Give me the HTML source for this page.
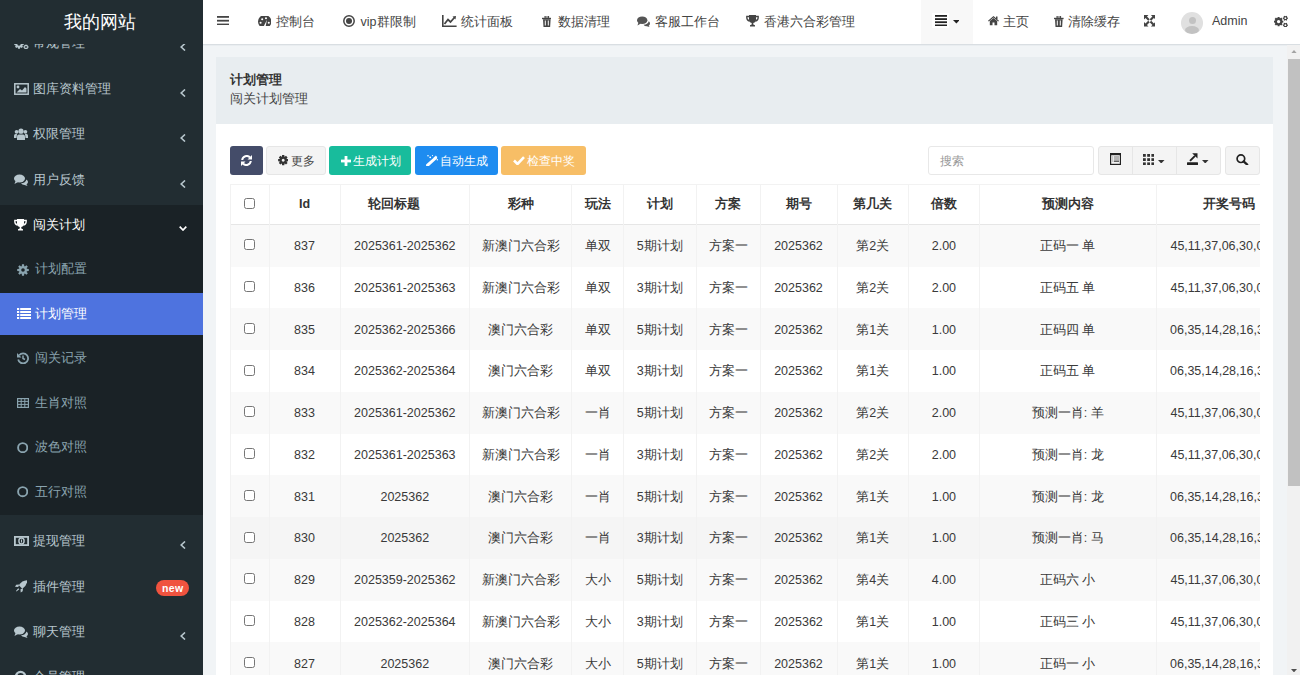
<!DOCTYPE html><html><head><meta charset="utf-8"><style>
*{margin:0;padding:0;box-sizing:border-box}
html,body{width:1300px;height:675px;overflow:hidden;background:#f1f4f6;font-family:"Liberation Sans", sans-serif;}
.a{position:absolute}
.t{position:absolute;white-space:nowrap}
#sb{position:absolute;left:0;top:0;width:203px;height:675px;background:#222d32;overflow:hidden}
#hd{position:absolute;left:203px;top:0;width:1097px;height:45px;background:#fff;border-bottom:1px solid #d9dee2;box-shadow:0 1px 0 #e9edf0}
.nv{position:absolute;top:0;height:44px;line-height:43px;font-size:12.5px;color:#555;white-space:nowrap}
.mi{position:absolute;left:0;width:203px;height:45px;line-height:45px;font-size:12.5px;color:#b8c7ce;white-space:nowrap}
.sm{color:#8aa4af}
.btn{position:absolute;top:146px;height:29px;border-radius:3px;color:#fff;font-size:12.5px;line-height:29px;white-space:nowrap}
.th{position:absolute;top:185px;height:39px;line-height:39px;font-size:12.5px;font-weight:bold;color:#333;text-align:center;white-space:nowrap}
.td{position:absolute;font-size:12.5px;color:#3a3a3a;text-align:center;white-space:nowrap}
</style></head><body><div id="sb"><div class="a" style="left:0;top:205px;width:203px;height:310.3px;background:#1a2226"></div><div class="a" style="left:0;top:293.3px;width:203px;height:41.5px;background:#4e73df"></div><svg style="position:absolute;left:13.5px;top:37.4px;width:16px;height:12px;" viewBox="0 0 16 12" fill="#b8c7ce"><path fill-rule="evenodd" d="M8.51 5.84 L9.71 6.07 L9.71 7.93 L8.51 8.16 L8.30 8.67 L8.99 9.67 L7.67 10.99 L6.67 10.30 L6.16 10.51 L5.93 11.71 L4.07 11.71 L3.84 10.51 L3.33 10.30 L2.33 10.99 L1.01 9.67 L1.70 8.67 L1.49 8.16 L0.29 7.93 L0.29 6.07 L1.49 5.84 L1.70 5.33 L1.01 4.33 L2.33 3.01 L3.33 3.70 L3.84 3.49 L4.07 2.29 L5.93 2.29 L6.16 3.49 L6.67 3.70 L7.67 3.01 L8.99 4.33 L8.30 5.33Z M6.70 7.00 A1.7 1.7 0 1 0 3.30 7.00 A1.7 1.7 0 1 0 6.70 7.00Z"/><path fill-rule="evenodd" d="M13.73 2.22 L14.51 2.33 L14.51 3.67 L13.73 3.78 L13.54 4.11 L13.83 4.84 L12.68 5.51 L12.19 4.89 L11.81 4.89 L11.32 5.51 L10.17 4.84 L10.46 4.11 L10.27 3.78 L9.49 3.67 L9.49 2.33 L10.27 2.22 L10.46 1.89 L10.17 1.16 L11.32 0.49 L11.81 1.11 L12.19 1.11 L12.68 0.49 L13.83 1.16 L13.54 1.89Z M12.90 3.00 A0.9 0.9 0 1 0 11.10 3.00 A0.9 0.9 0 1 0 12.90 3.00Z"/><path fill-rule="evenodd" d="M13.73 9.22 L14.51 9.33 L14.51 10.67 L13.73 10.78 L13.54 11.11 L13.83 11.84 L12.68 12.51 L12.19 11.89 L11.81 11.89 L11.32 12.51 L10.17 11.84 L10.46 11.11 L10.27 10.78 L9.49 10.67 L9.49 9.33 L10.27 9.22 L10.46 8.89 L10.17 8.16 L11.32 7.49 L11.81 8.11 L12.19 8.11 L12.68 7.49 L13.83 8.16 L13.54 8.89Z M12.90 10.00 A0.9 0.9 0 1 0 11.10 10.00 A0.9 0.9 0 1 0 12.90 10.00Z"/></svg><div class="t" style="left:33px;top:34.4px;height:18px;line-height:18px;font-size:12.5px;color:#b8c7ce">常规管理</div><svg style="position:absolute;left:180px;top:43.4px;width:6px;height:8px;" viewBox="0 0 6 8" fill="currentColor"><path d="M5 0.5 L1.2 4 L5 7.5" fill="none" stroke="#b8c7ce" stroke-width="1.6"/></svg><svg style="position:absolute;left:13.5px;top:82.8px;width:15px;height:12px;" viewBox="0 0 15 12" fill="currentColor"><rect x="0.8" y="0.8" width="13.4" height="10.4" fill="none" stroke="#b8c7ce" stroke-width="1.5"/><circle cx="4" cy="4" r="1.4" fill="#b8c7ce"/><path d="M2.5 9.5 L6 6 L8 7.5 L11 4 L12.5 5.5 L12.5 9.5Z" fill="#b8c7ce"/></svg><div class="t" style="left:33px;top:79.8px;height:18px;line-height:18px;font-size:12.5px;color:#b8c7ce">图库资料管理</div><svg style="position:absolute;left:180px;top:88.8px;width:6px;height:8px;" viewBox="0 0 6 8" fill="currentColor"><path d="M5 0.5 L1.2 4 L5 7.5" fill="none" stroke="#b8c7ce" stroke-width="1.6"/></svg><svg style="position:absolute;left:13.5px;top:128.2px;width:14px;height:12px;" viewBox="0 0 14 12" fill="#b8c7ce"><circle cx="7" cy="3.2" r="2.6"/><circle cx="2.6" cy="3.8" r="1.9"/><circle cx="11.4" cy="3.8" r="1.9"/><path d="M3 12 L3 8.5 Q3 6.5 5 6.5 L9 6.5 Q11 6.5 11 8.5 L11 12Z"/><path d="M0 10 L0 7.5 Q0 6 1.5 6 L3 6 L2.5 10Z"/><path d="M14 10 L14 7.5 Q14 6 12.5 6 L11 6 L11.5 10Z"/></svg><div class="t" style="left:33px;top:125.19999999999999px;height:18px;line-height:18px;font-size:12.5px;color:#b8c7ce">权限管理</div><svg style="position:absolute;left:180px;top:134.2px;width:6px;height:8px;" viewBox="0 0 6 8" fill="currentColor"><path d="M5 0.5 L1.2 4 L5 7.5" fill="none" stroke="#b8c7ce" stroke-width="1.6"/></svg><svg style="position:absolute;left:13.5px;top:173.8px;width:14px;height:12px;" viewBox="0 0 14 12" fill="#b8c7ce"><ellipse cx="5.5" cy="4.5" rx="5.5" ry="4"/><path d="M1.5 7 L0.5 10 L4 8Z"/><path d="M7 9.2 Q11.5 9 12.5 5.5 Q14 6.5 14 8 Q14 9.5 12.5 10.3 L13.5 12 L10.5 11 Q8 11 7 9.2Z"/></svg><div class="t" style="left:33px;top:170.8px;height:18px;line-height:18px;font-size:12.5px;color:#b8c7ce">用户反馈</div><svg style="position:absolute;left:180px;top:179.8px;width:6px;height:8px;" viewBox="0 0 6 8" fill="currentColor"><path d="M5 0.5 L1.2 4 L5 7.5" fill="none" stroke="#b8c7ce" stroke-width="1.6"/></svg><svg style="position:absolute;left:13.8px;top:218.7px;width:13px;height:12px;" viewBox="0 0 13 12" fill="#fff"><path d="M3 0 L10 0 L10 4.5 Q10 7.5 7.3 8 L7.3 9.5 L9 10.3 L9 11.5 L4 11.5 L4 10.3 L5.7 9.5 L5.7 8 Q3 7.5 3 4.5Z"/><path d="M3 1.5 L0.8 1.5 Q0.5 5.5 3.5 6" fill="none" stroke="#fff" stroke-width="1.3"/><path d="M10 1.5 L12.2 1.5 Q12.5 5.5 9.5 6" fill="none" stroke="#fff" stroke-width="1.3"/></svg><div class="t" style="left:33px;top:215.7px;height:18px;line-height:18px;font-size:12.5px;color:#fff">闯关计划</div><svg style="position:absolute;left:178.5px;top:226.0px;width:8px;height:5px;" viewBox="0 0 8 5" fill="currentColor"><path d="M0.7 0.7 L4 4 L7.3 0.7" fill="none" stroke="#fff" stroke-width="1.7"/></svg><svg style="position:absolute;left:16.5px;top:264.0px;width:12px;height:12px;" viewBox="0 0 12 12" fill="#8aa4af"><path fill-rule="evenodd" d="M9.92 4.80 L11.80 4.94 L11.80 7.06 L9.92 7.20 L9.62 7.92 L10.86 9.35 L9.35 10.86 L7.92 9.62 L7.20 9.92 L7.06 11.80 L4.94 11.80 L4.80 9.92 L4.08 9.62 L2.65 10.86 L1.14 9.35 L2.38 7.92 L2.08 7.20 L0.20 7.06 L0.20 4.94 L2.08 4.80 L2.38 4.08 L1.14 2.65 L2.65 1.14 L4.08 2.38 L4.80 2.08 L4.94 0.20 L7.06 0.20 L7.20 2.08 L7.92 2.38 L9.35 1.14 L10.86 2.65 L9.62 4.08Z M7.80 6.00 A1.8 1.8 0 1 0 4.20 6.00 A1.8 1.8 0 1 0 7.80 6.00Z"/></svg><div class="t" style="left:35px;top:260.4px;height:18px;line-height:18px;font-size:12.5px;color:#8aa4af">计划配置</div><svg style="position:absolute;left:16.5px;top:308.4px;width:14px;height:11px;" viewBox="0 0 14 11" fill="#fff"><rect x="0" y="0" width="2.2" height="2"/><rect x="3.2" y="0" width="10.8" height="2"/><rect x="0" y="3" width="2.2" height="2"/><rect x="3.2" y="3" width="10.8" height="2"/><rect x="0" y="6" width="2.2" height="2"/><rect x="3.2" y="6" width="10.8" height="2"/><rect x="0" y="9" width="2.2" height="2"/><rect x="3.2" y="9" width="10.8" height="2"/></svg><div class="t" style="left:35px;top:304.9px;height:18px;line-height:18px;font-size:12.5px;color:#fff">计划管理</div><svg style="position:absolute;left:16.5px;top:352.4px;width:12px;height:12px;" viewBox="0 0 12 12" fill="#8aa4af"><path d="M2.2 3.2 A5 5 0 1 1 1.2 7.5" fill="none" stroke="#8aa4af" stroke-width="1.8"/><path d="M0 1 L0 5.5 L4.5 5.5Z"/><path d="M6 3.5 L6 6.5 L8 7.5" fill="none" stroke="#8aa4af" stroke-width="1.5"/></svg><div class="t" style="left:35px;top:349.4px;height:18px;line-height:18px;font-size:12.5px;color:#8aa4af">闯关记录</div><svg style="position:absolute;left:16.5px;top:397.9px;width:12px;height:10px;" viewBox="0 0 12 10" fill="#8aa4af"><rect x="0.6" y="0.6" width="10.8" height="8.8" fill="none" stroke="#8aa4af" stroke-width="1.2"/><path d="M0.6 3.4 L11.4 3.4 M0.6 6.4 L11.4 6.4 M4.2 0.6 L4.2 9.4 M7.8 0.6 L7.8 9.4" stroke="#8aa4af" stroke-width="1"/></svg><div class="t" style="left:35px;top:393.9px;height:18px;line-height:18px;font-size:12.5px;color:#8aa4af">生肖对照</div><svg style="position:absolute;left:16.5px;top:441.7px;width:11.4px;height:11.4px;" viewBox="0 0 11.4 11.4" fill="currentColor"><circle cx="5.7" cy="5.7" r="4.6" fill="none" stroke="#8aa4af" stroke-width="1.9"/></svg><div class="t" style="left:35px;top:438.4px;height:18px;line-height:18px;font-size:12.5px;color:#8aa4af">波色对照</div><svg style="position:absolute;left:16.5px;top:486.2px;width:11.4px;height:11.4px;" viewBox="0 0 11.4 11.4" fill="currentColor"><circle cx="5.7" cy="5.7" r="4.6" fill="none" stroke="#8aa4af" stroke-width="1.9"/></svg><div class="t" style="left:35px;top:482.9px;height:18px;line-height:18px;font-size:12.5px;color:#8aa4af">五行对照</div><svg style="position:absolute;left:13.5px;top:536.2px;width:15px;height:10px;" viewBox="0 0 15 10" fill="#b8c7ce"><rect x="0.9" y="0.9" width="13.2" height="8.2" fill="none" stroke="#b8c7ce" stroke-width="1.8"/><ellipse cx="7.5" cy="5" rx="2.6" ry="3" fill="none" stroke="#b8c7ce" stroke-width="1.4"/><rect x="7" y="3.5" width="1" height="3"/></svg><div class="t" style="left:33px;top:532.2px;height:18px;line-height:18px;font-size:12.5px;color:#b8c7ce">提现管理</div><svg style="position:absolute;left:180px;top:541.2px;width:6px;height:8px;" viewBox="0 0 6 8" fill="currentColor"><path d="M5 0.5 L1.2 4 L5 7.5" fill="none" stroke="#b8c7ce" stroke-width="1.6"/></svg><svg style="position:absolute;left:14.5px;top:580.3000000000001px;width:12.5px;height:12.5px;" viewBox="0 0 12.5 12.5" fill="#b8c7ce"><path d="M12.3 0.2 Q7 0.3 3.8 5.2 L7.3 8.7 Q12.2 5.5 12.3 0.2Z"/><path d="M4.3 4.5 L1.2 4.8 L0 6.8 L3.2 7Z M8 8.2 L7.7 11.3 L5.7 12.5 L5.5 9.3Z M3.2 8.2 L4.3 9.3 L1.5 11.5 L1 11Z"/></svg><div class="t" style="left:33px;top:577.6px;height:18px;line-height:18px;font-size:12.5px;color:#b8c7ce">插件管理</div><div class="a" style="left:156px;top:580.2px;width:33.4px;height:16px;border-radius:8px;background:#f0533f;color:#fff;font-size:10.5px;letter-spacing:0.3px;font-weight:bold;text-align:center;line-height:16.5px">new</div><svg style="position:absolute;left:13.5px;top:625.6px;width:14px;height:12px;" viewBox="0 0 14 12" fill="#b8c7ce"><ellipse cx="5.5" cy="4.5" rx="5.5" ry="4"/><path d="M1.5 7 L0.5 10 L4 8Z"/><path d="M7 9.2 Q11.5 9 12.5 5.5 Q14 6.5 14 8 Q14 9.5 12.5 10.3 L13.5 12 L10.5 11 Q8 11 7 9.2Z"/></svg><div class="t" style="left:33px;top:622.6px;height:18px;line-height:18px;font-size:12.5px;color:#b8c7ce">聊天管理</div><svg style="position:absolute;left:180px;top:631.6px;width:6px;height:8px;" viewBox="0 0 6 8" fill="currentColor"><path d="M5 0.5 L1.2 4 L5 7.5" fill="none" stroke="#b8c7ce" stroke-width="1.6"/></svg><svg style="position:absolute;left:13.5px;top:670.3px;width:13px;height:13px;" viewBox="0 0 13 13" fill="currentColor"><circle cx="6.6" cy="6.5" r="4.6" fill="none" stroke="#b8c7ce" stroke-width="2.4"/></svg><div class="t" style="left:33px;top:667.8px;height:18px;line-height:18px;font-size:12.5px;color:#b8c7ce">会员管理</div><svg style="position:absolute;left:180px;top:676.8px;width:6px;height:8px;" viewBox="0 0 6 8" fill="currentColor"><path d="M5 0.5 L1.2 4 L5 7.5" fill="none" stroke="#b8c7ce" stroke-width="1.6"/></svg><div class="a" style="left:0;top:0;width:203px;height:44px;background:#222d32;color:#fff;text-indent:-4px;font-size:17.6px;line-height:44px;text-align:center">我的网站</div></div><div id="hd"></div><svg style="position:absolute;left:217px;top:16.1px;width:12px;height:9.4px;" viewBox="0 0 12 9.4" fill="#444"><rect x="0" y="0" width="12" height="1.8"/><rect x="0" y="3.8" width="12" height="1.8"/><rect x="0" y="7.6" width="12" height="1.8"/></svg><svg style="position:absolute;left:258px;top:15.7px;width:13.4px;height:10.6px;" viewBox="0 0 13.4 10.6" fill="#444"><path d="M2.2 10.6 A6.7 6.7 0 1 1 11.2 10.6Z"/><circle cx="2.6" cy="6.8" r="1.05" fill="#fff"/><circle cx="4.2" cy="3.3" r="1.05" fill="#fff"/><circle cx="8" cy="2.3" r="1.05" fill="#fff"/><circle cx="10.8" cy="6.8" r="1.05" fill="#fff"/><path d="M5.6 10.6 L9 3.8 L7.6 10.6Z" fill="#fff"/></svg><div class="t" style="left:275.6px;top:12.5px;height:18px;line-height:18px;font-size:12.5px;color:#444">控制台</div><svg style="position:absolute;left:343px;top:15px;width:12px;height:12px;" viewBox="0 0 12 12" fill="#444"><circle cx="6" cy="6" r="5.2" fill="none" stroke="#444" stroke-width="1.5"/><circle cx="6" cy="6" r="3"/></svg><div class="t" style="left:360.6px;top:12.5px;height:18px;line-height:18px;font-size:12.5px;color:#444">vip群限制</div><svg style="position:absolute;left:442px;top:15px;width:14.6px;height:12px;" viewBox="0 0 14.6 12" fill="#444"><path d="M0.8 0 L0.8 11.2 L14.6 11.2" fill="none" stroke="#444" stroke-width="1.6"/><path d="M2.5 9 L6 4.5 L8.5 7 L12.5 2.5" fill="none" stroke="#444" stroke-width="1.8"/><path d="M10.5 1.5 L14 1 L13.5 4.5Z"/></svg><div class="t" style="left:461px;top:12.5px;height:18px;line-height:18px;font-size:12.5px;color:#444">统计面板</div><svg style="position:absolute;left:541.7px;top:15.5px;width:9.6px;height:11px;" viewBox="0 0 9.6 11" fill="#444"><rect x="0" y="1.8" width="9.6" height="1.4"/><rect x="3" y="0" width="3.6" height="2" fill="none" stroke="#444" stroke-width="1"/><path d="M1 3.2 L1.5 11 L8.1 11 L8.6 3.2Z"/><rect x="2.8" y="4.5" width="1" height="5" fill="#fff"/><rect x="5.8" y="4.5" width="1" height="5" fill="#fff"/></svg><div class="t" style="left:557.8px;top:12.5px;height:18px;line-height:18px;font-size:12.5px;color:#444">数据清理</div><svg style="position:absolute;left:636.7px;top:16px;width:13px;height:11px;" viewBox="0 0 13 11" fill="#555"><ellipse cx="5.2" cy="4.2" rx="5.2" ry="3.8"/><path d="M1.4 6.6 L0.5 9.4 L3.8 7.6Z"/><path d="M6.6 8.7 Q10.8 8.5 11.8 5.2 Q13 6.1 13 7.5 Q13 8.9 11.7 9.7 L12.6 11 L9.8 10.3 Q7.5 10.3 6.6 8.7Z"/></svg><div class="t" style="left:654.6px;top:12.5px;height:18px;line-height:18px;font-size:12.5px;color:#444">客服工作台</div><svg style="position:absolute;left:746.3px;top:15px;width:13px;height:12px;" viewBox="0 0 13 12" fill="#444"><path d="M3 0 L10 0 L10 4.5 Q10 7.5 7.3 8 L7.3 9.5 L9 10.3 L9 11.5 L4 11.5 L4 10.3 L5.7 9.5 L5.7 8 Q3 7.5 3 4.5Z"/><path d="M3 1.5 L0.8 1.5 Q0.5 5.5 3.5 6" fill="none" stroke="#444" stroke-width="1.3"/><path d="M10 1.5 L12.2 1.5 Q12.5 5.5 9.5 6" fill="none" stroke="#444" stroke-width="1.3"/></svg><div class="t" style="left:764.2px;top:12.5px;height:18px;line-height:18px;font-size:12.5px;color:#444">香港六合彩管理</div><div class="a" style="left:921px;top:0;width:52px;height:44px;background:#f8f8f8"></div><div class="a" style="left:932px;top:13px;width:17px;height:15px;background:#fff"></div><svg style="position:absolute;left:934.6px;top:14.9px;width:12.9px;height:11.2px;" viewBox="0 0 12.9 11.2" fill="#222"><rect x="0" y="0" width="12.9" height="1.8"/><rect x="0" y="3.2" width="12.9" height="1.8"/><rect x="0" y="6.3" width="12.9" height="1.8"/><rect x="0" y="9.5" width="12.9" height="1.7"/></svg><svg style="position:absolute;left:952.6px;top:20px;width:6.7px;height:3.6px;" viewBox="0 0 6.7 3.6" fill="#222"><path d="M0 0 L6.7 0 L3.35 3.6Z"/></svg><svg style="position:absolute;left:987.5px;top:16.4px;width:11px;height:9.2px;" viewBox="0 0 11 9.2" fill="#444"><path d="M5.5 0 L11 4.8 L10.2 5.6 L5.5 1.6 L0.8 5.6 L0 4.8Z"/><path d="M1.8 5 L5.5 2 L9.2 5 L9.2 9.2 L6.5 9.2 L6.5 6.5 L4.5 6.5 L4.5 9.2 L1.8 9.2Z"/><rect x="8" y="0.5" width="1.5" height="2.5"/></svg><div class="t" style="left:1002.7px;top:12.5px;height:18px;line-height:18px;font-size:12.5px;color:#444">主页</div><svg style="position:absolute;left:1054.4px;top:15.5px;width:9.6px;height:11px;" viewBox="0 0 9.6 11" fill="#444"><rect x="0" y="1.8" width="9.6" height="1.4"/><rect x="3" y="0" width="3.6" height="2" fill="none" stroke="#444" stroke-width="1"/><path d="M1 3.2 L1.5 11 L8.1 11 L8.6 3.2Z"/><rect x="2.8" y="4.5" width="1" height="5" fill="#fff"/><rect x="5.8" y="4.5" width="1" height="5" fill="#fff"/></svg><div class="t" style="left:1067.5px;top:12.5px;height:18px;line-height:18px;font-size:12.5px;color:#444">清除缓存</div><svg style="position:absolute;left:1143.6px;top:15.3px;width:11.4px;height:11.4px;" viewBox="0 0 11.4 11.4" fill="#444"><path d="M0 0 L4.5 0 L3 1.5 L5.7 4.2 L4.2 5.7 L1.5 3 L0 4.5Z M11.4 0 L11.4 4.5 L9.9 3 L7.2 5.7 L5.7 4.2 L8.4 1.5 L6.9 0Z M0 11.4 L0 6.9 L1.5 8.4 L4.2 5.7 L5.7 7.2 L3 9.9 L4.5 11.4Z M11.4 11.4 L6.9 11.4 L8.4 9.9 L5.7 7.2 L7.2 5.7 L9.9 8.4 L11.4 6.9Z"/></svg><div class="a" style="left:1181px;top:11.5px;width:22.4px;height:22.4px;border-radius:50%;background:#e0e0e0;overflow:hidden"><div class="a" style="left:7.6px;top:5px;width:7.2px;height:7.2px;border-radius:50%;background:#c2c2c2"></div><div class="a" style="left:4px;top:14px;width:14.4px;height:8px;border-radius:50%;background:#c2c2c2"></div></div><div class="t" style="left:1212px;top:11.8px;height:18px;line-height:18px;font-size:12.5px;color:#444">Admin</div><svg style="position:absolute;left:1274px;top:14.7px;width:14px;height:12.6px;" viewBox="0 0 14 12.6" fill="#444"><path fill-rule="evenodd" d="M8.11 5.44 L9.31 5.67 L9.31 7.53 L8.11 7.76 L7.90 8.27 L8.59 9.27 L7.27 10.59 L6.27 9.90 L5.76 10.11 L5.53 11.31 L3.67 11.31 L3.44 10.11 L2.93 9.90 L1.93 10.59 L0.61 9.27 L1.30 8.27 L1.09 7.76 L-0.11 7.53 L-0.11 5.67 L1.09 5.44 L1.30 4.93 L0.61 3.93 L1.93 2.61 L2.93 3.30 L3.44 3.09 L3.67 1.89 L5.53 1.89 L5.76 3.09 L6.27 3.30 L7.27 2.61 L8.59 3.93 L7.90 4.93Z M6.30 6.60 A1.7 1.7 0 1 0 2.90 6.60 A1.7 1.7 0 1 0 6.30 6.60Z"/><path fill-rule="evenodd" d="M13.13 2.42 L13.91 2.53 L13.91 3.87 L13.13 3.98 L12.94 4.31 L13.23 5.04 L12.08 5.71 L11.59 5.09 L11.21 5.09 L10.72 5.71 L9.57 5.04 L9.86 4.31 L9.67 3.98 L8.89 3.87 L8.89 2.53 L9.67 2.42 L9.86 2.09 L9.57 1.36 L10.72 0.69 L11.21 1.31 L11.59 1.31 L12.08 0.69 L13.23 1.36 L12.94 2.09Z M12.30 3.20 A0.9 0.9 0 1 0 10.50 3.20 A0.9 0.9 0 1 0 12.30 3.20Z"/><path fill-rule="evenodd" d="M13.13 9.42 L13.91 9.53 L13.91 10.87 L13.13 10.98 L12.94 11.31 L13.23 12.04 L12.08 12.71 L11.59 12.09 L11.21 12.09 L10.72 12.71 L9.57 12.04 L9.86 11.31 L9.67 10.98 L8.89 10.87 L8.89 9.53 L9.67 9.42 L9.86 9.09 L9.57 8.36 L10.72 7.69 L11.21 8.31 L11.59 8.31 L12.08 7.69 L13.23 8.36 L12.94 9.09Z M12.30 10.20 A0.9 0.9 0 1 0 10.50 10.20 A0.9 0.9 0 1 0 12.30 10.20Z"/></svg><div class="a" style="left:216px;top:57px;width:1057px;height:620px;background:#fff"></div><div class="a" style="left:216px;top:57px;width:1057px;height:66.6px;background:#e8edf0"></div><div class="t" style="left:230px;top:71px;height:18px;line-height:18px;font-size:12.5px;font-weight:bold;color:#333">计划管理</div><div class="t" style="left:230px;top:90px;height:18px;line-height:18px;font-size:12.5px;color:#444">闯关计划管理</div><div class="btn" style="left:230px;width:33px;background:#444c69"></div><svg style="position:absolute;left:241px;top:155.0px;width:11px;height:11px;" viewBox="0 0 11 11" fill="#fff"><path d="M1.2 5 A4.5 4.5 0 0 1 9 2.5" fill="none" stroke="#fff" stroke-width="2"/><path d="M9.8 6 A4.5 4.5 0 0 1 2 8.5" fill="none" stroke="#fff" stroke-width="2"/><path d="M11 0 L11 4.5 L6.5 4.5Z M0 11 L0 6.5 L4.5 6.5Z"/></svg><div class="btn" style="left:266px;width:60px;background:#f4f4f4;border:1px solid #e6e6e6;color:#444"></div><svg style="position:absolute;left:277.6px;top:155.4px;width:10.4px;height:10.4px;" viewBox="0 0 10.4 10.4" fill="#333"><path fill-rule="evenodd" d="M8.67 3.92 L10.28 4.09 L10.28 6.31 L8.67 6.48 L8.56 6.75 L9.58 8.00 L8.00 9.58 L6.75 8.56 L6.48 8.67 L6.31 10.28 L4.09 10.28 L3.92 8.67 L3.65 8.56 L2.40 9.58 L0.82 8.00 L1.84 6.75 L1.73 6.48 L0.12 6.31 L0.12 4.09 L1.73 3.92 L1.84 3.65 L0.82 2.40 L2.40 0.82 L3.65 1.84 L3.92 1.73 L4.09 0.12 L6.31 0.12 L6.48 1.73 L6.75 1.84 L8.00 0.82 L9.58 2.40 L8.56 3.65Z M6.70 5.20 A1.5 1.5 0 1 0 3.70 5.20 A1.5 1.5 0 1 0 6.70 5.20Z"/></svg><div class="t" style="left:291px;top:151.5px;height:18px;line-height:18px;font-size:12px;color:#444">更多</div><div class="btn" style="left:329px;width:82px;background:#18bc9c"></div><svg style="position:absolute;left:340.5px;top:155.5px;width:10px;height:10px;" viewBox="0 0 10 10" fill="#fff"><rect x="3.6" y="0" width="2.8" height="10"/><rect x="0" y="3.6" width="10" height="2.8"/></svg><div class="t" style="left:353px;top:151.5px;height:18px;line-height:18px;font-size:12px;color:#fff">生成计划</div><div class="btn" style="left:414.5px;width:83px;background:#1e8cf0"></div><svg style="position:absolute;left:426px;top:154.8px;width:12.5px;height:11.5px;" viewBox="0 0 12.5 11.5" fill="#fff"><path d="M1.6 10.2 L9.6 3" stroke="#fff" stroke-width="3" stroke-linecap="round"/><path d="M8.3 3.6 L10.6 1.3" stroke="#fff" stroke-width="2.2" stroke-opacity="0.85"/><circle cx="2" cy="0.8" r="0.8"/><circle cx="4.2" cy="2.3" r="0.9"/><circle cx="11.3" cy="4.8" r="0.75"/><circle cx="6.5" cy="0.6" r="0.6"/></svg><div class="t" style="left:440px;top:151.5px;height:18px;line-height:18px;font-size:12px;color:#fff">自动生成</div><div class="btn" style="left:501.4px;width:84.6px;background:#f7be66"></div><svg style="position:absolute;left:513px;top:156.0px;width:12px;height:9px;" viewBox="0 0 12 9" fill="currentColor"><path d="M1 4.5 L4.5 8 L11 1.2" fill="none" stroke="#fff" stroke-width="2.6"/></svg><div class="t" style="left:527px;top:151.5px;height:18px;line-height:18px;font-size:12px;color:#fff">检查中奖</div><div class="a" style="left:928px;top:146.3px;width:165.7px;height:29.1px;border:1px solid #e8e8e8;border-radius:3px;background:#fff"></div><div class="t" style="left:940px;top:151.5px;height:18px;line-height:18px;font-size:12px;color:#999">搜索</div><div class="a" style="left:1098.2px;top:146.3px;width:122.6px;height:29.1px;border:1px solid #e6e6e6;border-radius:3px;background:#f4f4f4"></div><div class="a" style="left:1131.6px;top:146.3px;width:1px;height:29.1px;background:#e6e6e6"></div><div class="a" style="left:1176px;top:146.3px;width:1px;height:29.1px;background:#e6e6e6"></div><div class="a" style="left:1225px;top:146.3px;width:35px;height:29.1px;border:1px solid #e6e6e6;border-radius:3px;background:#f4f4f4"></div><svg style="position:absolute;left:1110px;top:153.3px;width:11px;height:12px;" viewBox="0 0 11 12" fill="#222"><rect x="0.6" y="0.6" width="9.8" height="10.8" fill="none" stroke="#222" stroke-width="1.2"/><rect x="0.6" y="0.6" width="9.8" height="1.6"/><rect x="2" y="3.5" width="1" height="1" fill="#999"/><rect x="3.8" y="3.5" width="5.2" height="1" fill="#777"/><rect x="2" y="5.5" width="1" height="1" fill="#999"/><rect x="3.8" y="5.5" width="5.2" height="1" fill="#777"/><rect x="2" y="7.5" width="1" height="1" fill="#999"/><rect x="3.8" y="7.5" width="5.2" height="1.4" fill="#555"/></svg><svg style="position:absolute;left:1143px;top:153.8px;width:11.2px;height:11.2px;" viewBox="0 0 11.2 11.2" fill="#333"><rect x="0.0" y="0.0" width="2.8" height="2.8"/><rect x="4.2" y="0.0" width="2.8" height="2.8"/><rect x="8.4" y="0.0" width="2.8" height="2.8"/><rect x="0.0" y="4.2" width="2.8" height="2.8"/><rect x="4.2" y="4.2" width="2.8" height="2.8"/><rect x="8.4" y="4.2" width="2.8" height="2.8"/><rect x="0.0" y="8.4" width="2.8" height="2.8"/><rect x="4.2" y="8.4" width="2.8" height="2.8"/><rect x="8.4" y="8.4" width="2.8" height="2.8"/></svg><svg style="position:absolute;left:1158.3px;top:159.5px;width:6.5px;height:3.5px;" viewBox="0 0 6.5 3.5" fill="#333"><path d="M0 0 L6.5 0 L3.25 3.5Z"/></svg><svg style="position:absolute;left:1187px;top:153.3px;width:11px;height:12px;" viewBox="0 0 11 12" fill="#222"><rect x="0" y="9.3" width="11" height="2.7" rx="0.5"/><path d="M3 7.8 L8 2.8" stroke="#222" stroke-width="1.9"/><path d="M5.2 0.3 L10.5 0.3 L10.5 5.6Z"/></svg><svg style="position:absolute;left:1202px;top:159.5px;width:6.5px;height:3.5px;" viewBox="0 0 6.5 3.5" fill="#333"><path d="M0 0 L6.5 0 L3.25 3.5Z"/></svg><svg style="position:absolute;left:1236.4px;top:154.2px;width:12.2px;height:11.2px;" viewBox="0 0 12.2 11.2" fill="#222"><circle cx="4.9" cy="4.7" r="3.8" fill="none" stroke="#222" stroke-width="1.7"/><path d="M7.6 7.4 L11.2 10.6" stroke="#222" stroke-width="2.3" stroke-linecap="round"/></svg><div class="a" style="left:230px;top:184px;width:1030px;height:500px;overflow:hidden"><div class="a" style="left:0;top:0;width:1100px;height:1px;background:#f2f2f2"></div><div class="a" style="left:0;top:40px;width:1100px;height:1.5px;background:#e6e6e6"></div><div class="a" style="left:0;top:40.90px;width:1100px;height:41.75px;background:#f9f9f9"></div><div class="a" style="left:0;top:82.65px;width:1100px;height:41.75px;background:#fff"></div><div class="a" style="left:0;top:124.40px;width:1100px;height:41.75px;background:#f9f9f9"></div><div class="a" style="left:0;top:166.15px;width:1100px;height:41.75px;background:#fff"></div><div class="a" style="left:0;top:207.90px;width:1100px;height:41.75px;background:#f9f9f9"></div><div class="a" style="left:0;top:249.65px;width:1100px;height:41.75px;background:#fff"></div><div class="a" style="left:0;top:291.40px;width:1100px;height:41.75px;background:#f9f9f9"></div><div class="a" style="left:0;top:333.15px;width:1100px;height:41.75px;background:#f5f5f5"></div><div class="a" style="left:0;top:374.90px;width:1100px;height:41.75px;background:#f9f9f9"></div><div class="a" style="left:0;top:416.65px;width:1100px;height:41.75px;background:#fff"></div><div class="a" style="left:0;top:458.40px;width:1100px;height:41.75px;background:#f9f9f9"></div><div class="a" style="left:-0.5px;top:0;width:1px;height:500px;background:#f2f2f2"></div><div class="a" style="left:38.5px;top:0;width:1px;height:500px;background:#f2f2f2"></div><div class="a" style="left:109.5px;top:0;width:1px;height:500px;background:#f2f2f2"></div><div class="a" style="left:239.1px;top:0;width:1px;height:500px;background:#f2f2f2"></div><div class="a" style="left:341.3px;top:0;width:1px;height:500px;background:#f2f2f2"></div><div class="a" style="left:393.2px;top:0;width:1px;height:500px;background:#f2f2f2"></div><div class="a" style="left:465.5px;top:0;width:1px;height:500px;background:#f2f2f2"></div><div class="a" style="left:529.5px;top:0;width:1px;height:500px;background:#f2f2f2"></div><div class="a" style="left:606.5px;top:0;width:1px;height:500px;background:#f2f2f2"></div><div class="a" style="left:678.1px;top:0;width:1px;height:500px;background:#f2f2f2"></div><div class="a" style="left:748.7px;top:0;width:1px;height:500px;background:#f2f2f2"></div><div class="a" style="left:925.7px;top:0;width:1px;height:500px;background:#f2f2f2"></div><div class="a" style="left:13.8px;top:14px;width:11px;height:11px;border:1px solid #767676;border-radius:2.5px;background:#fff"></div><div class="th" style="left:39.0px;top:1px;width:71.0px">Id</div><div class="th" style="left:110.0px;top:1px;width:108.6px">轮回标题</div><div class="th" style="left:239.6px;top:1px;width:102.2px">彩种</div><div class="th" style="left:341.8px;top:1px;width:51.9px">玩法</div><div class="th" style="left:393.7px;top:1px;width:72.3px">计划</div><div class="th" style="left:466.0px;top:1px;width:64.0px">方案</div><div class="th" style="left:530.0px;top:1px;width:77.0px">期号</div><div class="th" style="left:607.0px;top:1px;width:71.6px">第几关</div><div class="th" style="left:678.6px;top:1px;width:70.6px">倍数</div><div class="th" style="left:749.2px;top:1px;width:177.0px">预测内容</div><div class="th" style="left:926.2px;top:1px;width:145.8px">开奖号码</div><div class="a" style="left:13.8px;top:55.48px;width:11px;height:11px;border:1px solid #767676;border-radius:2.5px;background:#fff"></div><div class="td" style="left:39.0px;top:53.17px;width:71.0px;height:18px;line-height:18px">837</div><div class="td" style="left:110.0px;top:53.17px;width:129.6px;height:18px;line-height:18px">2025361-2025362</div><div class="td" style="left:239.6px;top:53.17px;width:102.2px;height:18px;line-height:18px">新澳门六合彩</div><div class="td" style="left:341.8px;top:53.17px;width:51.9px;height:18px;line-height:18px">单双</div><div class="td" style="left:393.7px;top:53.17px;width:72.3px;height:18px;line-height:18px">5期计划</div><div class="td" style="left:466.0px;top:53.17px;width:64.0px;height:18px;line-height:18px">方案一</div><div class="td" style="left:530.0px;top:53.17px;width:77.0px;height:18px;line-height:18px">2025362</div><div class="td" style="left:607.0px;top:53.17px;width:71.6px;height:18px;line-height:18px">第2关</div><div class="td" style="left:678.6px;top:53.17px;width:70.6px;height:18px;line-height:18px">2.00</div><div class="td" style="left:749.2px;top:53.17px;width:177.0px;height:18px;line-height:18px">正码一 单</div><div class="td" style="left:926.2px;top:53.17px;width:145.8px;height:18px;line-height:18px">45,11,37,06,30,07,21</div><div class="a" style="left:13.8px;top:97.23px;width:11px;height:11px;border:1px solid #767676;border-radius:2.5px;background:#fff"></div><div class="td" style="left:39.0px;top:94.93px;width:71.0px;height:18px;line-height:18px">836</div><div class="td" style="left:110.0px;top:94.93px;width:129.6px;height:18px;line-height:18px">2025361-2025363</div><div class="td" style="left:239.6px;top:94.93px;width:102.2px;height:18px;line-height:18px">新澳门六合彩</div><div class="td" style="left:341.8px;top:94.93px;width:51.9px;height:18px;line-height:18px">单双</div><div class="td" style="left:393.7px;top:94.93px;width:72.3px;height:18px;line-height:18px">3期计划</div><div class="td" style="left:466.0px;top:94.93px;width:64.0px;height:18px;line-height:18px">方案一</div><div class="td" style="left:530.0px;top:94.93px;width:77.0px;height:18px;line-height:18px">2025362</div><div class="td" style="left:607.0px;top:94.93px;width:71.6px;height:18px;line-height:18px">第2关</div><div class="td" style="left:678.6px;top:94.93px;width:70.6px;height:18px;line-height:18px">2.00</div><div class="td" style="left:749.2px;top:94.93px;width:177.0px;height:18px;line-height:18px">正码五 单</div><div class="td" style="left:926.2px;top:94.93px;width:145.8px;height:18px;line-height:18px">45,11,37,06,30,07,21</div><div class="a" style="left:13.8px;top:138.97px;width:11px;height:11px;border:1px solid #767676;border-radius:2.5px;background:#fff"></div><div class="td" style="left:39.0px;top:136.68px;width:71.0px;height:18px;line-height:18px">835</div><div class="td" style="left:110.0px;top:136.68px;width:129.6px;height:18px;line-height:18px">2025362-2025366</div><div class="td" style="left:239.6px;top:136.68px;width:102.2px;height:18px;line-height:18px">澳门六合彩</div><div class="td" style="left:341.8px;top:136.68px;width:51.9px;height:18px;line-height:18px">单双</div><div class="td" style="left:393.7px;top:136.68px;width:72.3px;height:18px;line-height:18px">5期计划</div><div class="td" style="left:466.0px;top:136.68px;width:64.0px;height:18px;line-height:18px">方案一</div><div class="td" style="left:530.0px;top:136.68px;width:77.0px;height:18px;line-height:18px">2025362</div><div class="td" style="left:607.0px;top:136.68px;width:71.6px;height:18px;line-height:18px">第1关</div><div class="td" style="left:678.6px;top:136.68px;width:70.6px;height:18px;line-height:18px">1.00</div><div class="td" style="left:749.2px;top:136.68px;width:177.0px;height:18px;line-height:18px">正码四 单</div><div class="td" style="left:926.2px;top:136.68px;width:145.8px;height:18px;line-height:18px">06,35,14,28,16,37,21</div><div class="a" style="left:13.8px;top:180.72px;width:11px;height:11px;border:1px solid #767676;border-radius:2.5px;background:#fff"></div><div class="td" style="left:39.0px;top:178.43px;width:71.0px;height:18px;line-height:18px">834</div><div class="td" style="left:110.0px;top:178.43px;width:129.6px;height:18px;line-height:18px">2025362-2025364</div><div class="td" style="left:239.6px;top:178.43px;width:102.2px;height:18px;line-height:18px">澳门六合彩</div><div class="td" style="left:341.8px;top:178.43px;width:51.9px;height:18px;line-height:18px">单双</div><div class="td" style="left:393.7px;top:178.43px;width:72.3px;height:18px;line-height:18px">3期计划</div><div class="td" style="left:466.0px;top:178.43px;width:64.0px;height:18px;line-height:18px">方案一</div><div class="td" style="left:530.0px;top:178.43px;width:77.0px;height:18px;line-height:18px">2025362</div><div class="td" style="left:607.0px;top:178.43px;width:71.6px;height:18px;line-height:18px">第1关</div><div class="td" style="left:678.6px;top:178.43px;width:70.6px;height:18px;line-height:18px">1.00</div><div class="td" style="left:749.2px;top:178.43px;width:177.0px;height:18px;line-height:18px">正码五 单</div><div class="td" style="left:926.2px;top:178.43px;width:145.8px;height:18px;line-height:18px">06,35,14,28,16,37,21</div><div class="a" style="left:13.8px;top:222.47px;width:11px;height:11px;border:1px solid #767676;border-radius:2.5px;background:#fff"></div><div class="td" style="left:39.0px;top:220.18px;width:71.0px;height:18px;line-height:18px">833</div><div class="td" style="left:110.0px;top:220.18px;width:129.6px;height:18px;line-height:18px">2025361-2025362</div><div class="td" style="left:239.6px;top:220.18px;width:102.2px;height:18px;line-height:18px">新澳门六合彩</div><div class="td" style="left:341.8px;top:220.18px;width:51.9px;height:18px;line-height:18px">一肖</div><div class="td" style="left:393.7px;top:220.18px;width:72.3px;height:18px;line-height:18px">5期计划</div><div class="td" style="left:466.0px;top:220.18px;width:64.0px;height:18px;line-height:18px">方案一</div><div class="td" style="left:530.0px;top:220.18px;width:77.0px;height:18px;line-height:18px">2025362</div><div class="td" style="left:607.0px;top:220.18px;width:71.6px;height:18px;line-height:18px">第2关</div><div class="td" style="left:678.6px;top:220.18px;width:70.6px;height:18px;line-height:18px">2.00</div><div class="td" style="left:749.2px;top:220.18px;width:177.0px;height:18px;line-height:18px">预测一肖: 羊</div><div class="td" style="left:926.2px;top:220.18px;width:145.8px;height:18px;line-height:18px">45,11,37,06,30,07,21</div><div class="a" style="left:13.8px;top:264.22px;width:11px;height:11px;border:1px solid #767676;border-radius:2.5px;background:#fff"></div><div class="td" style="left:39.0px;top:261.92px;width:71.0px;height:18px;line-height:18px">832</div><div class="td" style="left:110.0px;top:261.92px;width:129.6px;height:18px;line-height:18px">2025361-2025363</div><div class="td" style="left:239.6px;top:261.92px;width:102.2px;height:18px;line-height:18px">新澳门六合彩</div><div class="td" style="left:341.8px;top:261.92px;width:51.9px;height:18px;line-height:18px">一肖</div><div class="td" style="left:393.7px;top:261.92px;width:72.3px;height:18px;line-height:18px">3期计划</div><div class="td" style="left:466.0px;top:261.92px;width:64.0px;height:18px;line-height:18px">方案一</div><div class="td" style="left:530.0px;top:261.92px;width:77.0px;height:18px;line-height:18px">2025362</div><div class="td" style="left:607.0px;top:261.92px;width:71.6px;height:18px;line-height:18px">第2关</div><div class="td" style="left:678.6px;top:261.92px;width:70.6px;height:18px;line-height:18px">2.00</div><div class="td" style="left:749.2px;top:261.92px;width:177.0px;height:18px;line-height:18px">预测一肖: 龙</div><div class="td" style="left:926.2px;top:261.92px;width:145.8px;height:18px;line-height:18px">45,11,37,06,30,07,21</div><div class="a" style="left:13.8px;top:305.97px;width:11px;height:11px;border:1px solid #767676;border-radius:2.5px;background:#fff"></div><div class="td" style="left:39.0px;top:303.67px;width:71.0px;height:18px;line-height:18px">831</div><div class="td" style="left:110.0px;top:303.67px;width:129.6px;height:18px;line-height:18px">2025362</div><div class="td" style="left:239.6px;top:303.67px;width:102.2px;height:18px;line-height:18px">澳门六合彩</div><div class="td" style="left:341.8px;top:303.67px;width:51.9px;height:18px;line-height:18px">一肖</div><div class="td" style="left:393.7px;top:303.67px;width:72.3px;height:18px;line-height:18px">5期计划</div><div class="td" style="left:466.0px;top:303.67px;width:64.0px;height:18px;line-height:18px">方案一</div><div class="td" style="left:530.0px;top:303.67px;width:77.0px;height:18px;line-height:18px">2025362</div><div class="td" style="left:607.0px;top:303.67px;width:71.6px;height:18px;line-height:18px">第1关</div><div class="td" style="left:678.6px;top:303.67px;width:70.6px;height:18px;line-height:18px">1.00</div><div class="td" style="left:749.2px;top:303.67px;width:177.0px;height:18px;line-height:18px">预测一肖: 龙</div><div class="td" style="left:926.2px;top:303.67px;width:145.8px;height:18px;line-height:18px">06,35,14,28,16,37,21</div><div class="a" style="left:13.8px;top:347.72px;width:11px;height:11px;border:1px solid #767676;border-radius:2.5px;background:#fff"></div><div class="td" style="left:39.0px;top:345.42px;width:71.0px;height:18px;line-height:18px">830</div><div class="td" style="left:110.0px;top:345.42px;width:129.6px;height:18px;line-height:18px">2025362</div><div class="td" style="left:239.6px;top:345.42px;width:102.2px;height:18px;line-height:18px">澳门六合彩</div><div class="td" style="left:341.8px;top:345.42px;width:51.9px;height:18px;line-height:18px">一肖</div><div class="td" style="left:393.7px;top:345.42px;width:72.3px;height:18px;line-height:18px">3期计划</div><div class="td" style="left:466.0px;top:345.42px;width:64.0px;height:18px;line-height:18px">方案一</div><div class="td" style="left:530.0px;top:345.42px;width:77.0px;height:18px;line-height:18px">2025362</div><div class="td" style="left:607.0px;top:345.42px;width:71.6px;height:18px;line-height:18px">第1关</div><div class="td" style="left:678.6px;top:345.42px;width:70.6px;height:18px;line-height:18px">1.00</div><div class="td" style="left:749.2px;top:345.42px;width:177.0px;height:18px;line-height:18px">预测一肖: 马</div><div class="td" style="left:926.2px;top:345.42px;width:145.8px;height:18px;line-height:18px">06,35,14,28,16,37,21</div><div class="a" style="left:13.8px;top:389.47px;width:11px;height:11px;border:1px solid #767676;border-radius:2.5px;background:#fff"></div><div class="td" style="left:39.0px;top:387.17px;width:71.0px;height:18px;line-height:18px">829</div><div class="td" style="left:110.0px;top:387.17px;width:129.6px;height:18px;line-height:18px">2025359-2025362</div><div class="td" style="left:239.6px;top:387.17px;width:102.2px;height:18px;line-height:18px">新澳门六合彩</div><div class="td" style="left:341.8px;top:387.17px;width:51.9px;height:18px;line-height:18px">大小</div><div class="td" style="left:393.7px;top:387.17px;width:72.3px;height:18px;line-height:18px">5期计划</div><div class="td" style="left:466.0px;top:387.17px;width:64.0px;height:18px;line-height:18px">方案一</div><div class="td" style="left:530.0px;top:387.17px;width:77.0px;height:18px;line-height:18px">2025362</div><div class="td" style="left:607.0px;top:387.17px;width:71.6px;height:18px;line-height:18px">第4关</div><div class="td" style="left:678.6px;top:387.17px;width:70.6px;height:18px;line-height:18px">4.00</div><div class="td" style="left:749.2px;top:387.17px;width:177.0px;height:18px;line-height:18px">正码六 小</div><div class="td" style="left:926.2px;top:387.17px;width:145.8px;height:18px;line-height:18px">45,11,37,06,30,07,21</div><div class="a" style="left:13.8px;top:431.22px;width:11px;height:11px;border:1px solid #767676;border-radius:2.5px;background:#fff"></div><div class="td" style="left:39.0px;top:428.92px;width:71.0px;height:18px;line-height:18px">828</div><div class="td" style="left:110.0px;top:428.92px;width:129.6px;height:18px;line-height:18px">2025362-2025364</div><div class="td" style="left:239.6px;top:428.92px;width:102.2px;height:18px;line-height:18px">新澳门六合彩</div><div class="td" style="left:341.8px;top:428.92px;width:51.9px;height:18px;line-height:18px">大小</div><div class="td" style="left:393.7px;top:428.92px;width:72.3px;height:18px;line-height:18px">3期计划</div><div class="td" style="left:466.0px;top:428.92px;width:64.0px;height:18px;line-height:18px">方案一</div><div class="td" style="left:530.0px;top:428.92px;width:77.0px;height:18px;line-height:18px">2025362</div><div class="td" style="left:607.0px;top:428.92px;width:71.6px;height:18px;line-height:18px">第1关</div><div class="td" style="left:678.6px;top:428.92px;width:70.6px;height:18px;line-height:18px">1.00</div><div class="td" style="left:749.2px;top:428.92px;width:177.0px;height:18px;line-height:18px">正码三 小</div><div class="td" style="left:926.2px;top:428.92px;width:145.8px;height:18px;line-height:18px">45,11,37,06,30,07,21</div><div class="a" style="left:13.8px;top:472.97px;width:11px;height:11px;border:1px solid #767676;border-radius:2.5px;background:#fff"></div><div class="td" style="left:39.0px;top:470.67px;width:71.0px;height:18px;line-height:18px">827</div><div class="td" style="left:110.0px;top:470.67px;width:129.6px;height:18px;line-height:18px">2025362</div><div class="td" style="left:239.6px;top:470.67px;width:102.2px;height:18px;line-height:18px">澳门六合彩</div><div class="td" style="left:341.8px;top:470.67px;width:51.9px;height:18px;line-height:18px">大小</div><div class="td" style="left:393.7px;top:470.67px;width:72.3px;height:18px;line-height:18px">5期计划</div><div class="td" style="left:466.0px;top:470.67px;width:64.0px;height:18px;line-height:18px">方案一</div><div class="td" style="left:530.0px;top:470.67px;width:77.0px;height:18px;line-height:18px">2025362</div><div class="td" style="left:607.0px;top:470.67px;width:71.6px;height:18px;line-height:18px">第1关</div><div class="td" style="left:678.6px;top:470.67px;width:70.6px;height:18px;line-height:18px">1.00</div><div class="td" style="left:749.2px;top:470.67px;width:177.0px;height:18px;line-height:18px">正码一 小</div><div class="td" style="left:926.2px;top:470.67px;width:145.8px;height:18px;line-height:18px">06,35,14,28,16,37,21</div></div><div class="a" style="left:1287px;top:45px;width:13px;height:630px;background:#f1f1f1"></div><div class="a" style="left:1288px;top:58.5px;width:12px;height:427.5px;background:#c1c1c1"></div><svg style="position:absolute;left:1291px;top:50px;width:6px;height:3.4px;" viewBox="0 0 6 3.4" fill="#a3a3a3"><path d="M0 3.4 L3 0 L6 3.4Z"/></svg><svg style="position:absolute;left:1291px;top:668.8px;width:6px;height:3.4px;" viewBox="0 0 6 3.4" fill="#505050"><path d="M0 0 L3 3.4 L6 0Z"/></svg></body></html>
